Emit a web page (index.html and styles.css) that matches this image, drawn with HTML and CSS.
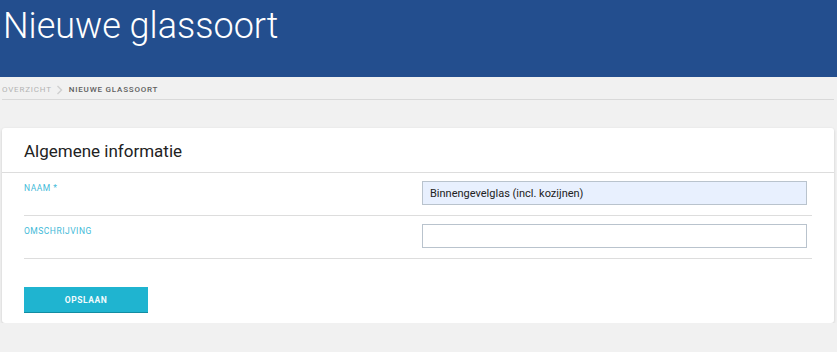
FILE: index.html
```html
<!DOCTYPE html>
<html lang="nl">
<head>
    <meta charset="UTF-8">
    <meta name="viewport" content="width=device-width, initial-scale=1.0">
    <title>Nieuwe glassoort</title>
    <link rel="stylesheet" href="styles.css">
</head>
<body>
    <header class="page-header">
        <h1>Nieuwe glassoort</h1>
    </header>

    <div class="content">
        <!-- kruimelpad -->
        <nav class="breadcrumb">
            <a href="#">Overzicht</a>
            <svg class="crumb-sep" width="7" height="10" viewBox="0 0 7 10"><path d="M1.5 1 L5.5 5 L1.5 9" fill="none" stroke="#cfcfcf" stroke-width="1.4"/></svg>
            <span class="current">Nieuwe glassoort</span>
        </nav>

        <form class="card">
            <div class="card-title">Algemene informatie</div>
            <div class="card-body">
                <div class="form-row">
                    <label for="naam">Naam *</label>
                    <div class="field">
                        <input id="naam" class="input input-filled" type="text" value="Binnengevelglas (incl. kozijnen)">
                    </div>
                </div>
                <div class="form-row">
                    <label for="omschrijving">Omschrijving</label>
                    <div class="field">
                        <input id="omschrijving" class="input" type="text">
                    </div>
                </div>
                <button type="button" class="btn-save">Opslaan</button>
            </div>
        </form>
    </div>
</body>
</html>
```

FILE: styles.css
```css
body {
    margin: 0;
    background-color: #f1f1f1;
    font-family: Roboto, "Liberation Sans", Arial, sans-serif;
    color: #222;
}

/* kop */
.page-header {
    background: #234e8e;
    height: 77px;
    padding: 6px 3px 0;
    box-sizing: border-box;
}

.page-header h1 {
    margin: 0;
    font-size: 36px;
    line-height: 40px;
    font-weight: 300;
    color: #fff;
}

.content {
    margin: 0 3px 0 2px;
}

/* kruimelpad */
.breadcrumb {
    display: flex;
    align-items: center;
    padding: 7px 0 3px;
    border-bottom: 1px solid #d9d9d9;
    font-size: 8px;
    line-height: 12px;
    letter-spacing: 0.8px;
    text-transform: uppercase;
}

.breadcrumb a {
    color: #b3b3b3;
    text-decoration: none;
}

.crumb-sep {
    margin: 0 6px 0 4px;
}

.breadcrumb .current {
    color: #5f5f5f;
    font-weight: 500;
}

/* kaart */
.card {
    margin-top: 28px;
    background: #fff;
    border-radius: 3px;
    box-shadow: 0 1px 3px rgba(0, 0, 0, 0.16);
}

.card-title {
    padding: 13px 22px 11px;
    font-size: 17px;
    line-height: 20px;
    border-bottom: 1px solid #dddddd;
}

.card-body {
    padding: 0 22px 10px;
}

.form-row {
    display: grid;
    grid-template-columns: 1fr 1fr;
    padding: 8px 0 10px;
    border-bottom: 1px solid #dddddd;
}

.form-row label {
    padding-top: 1px;
    font-size: 8.5px;
    line-height: 12px;
    letter-spacing: 0.5px;
    text-transform: uppercase;
    color: #3fbad8;
}

.field {
    padding: 0 5px 0 4px;
}

.input {
    display: block;
    width: 100%;
    height: 24px;
    box-sizing: border-box;
    margin: 0;
    padding: 0 7px;
    border: 1px solid #b9c3cd;
    border-radius: 0;
    background: #fff;
    font-family: Roboto, "Liberation Sans", Arial, sans-serif;
    font-size: 11px;
    color: #222;
    outline: none;
}

.input-filled {
    background: #e8f0fe;
}

.btn-save {
    display: block;
    width: 124px;
    height: 26px;
    margin-top: 28px;
    padding: 0;
    border: none;
    border-bottom: 1px solid #138ca2;
    background: #1fb4d0;
    color: #f2fbfd;
    font-family: Roboto, "Liberation Sans", Arial, sans-serif;
    font-size: 8.5px;
    font-weight: 700;
    letter-spacing: 0.55px;
    text-transform: uppercase;
}
```
